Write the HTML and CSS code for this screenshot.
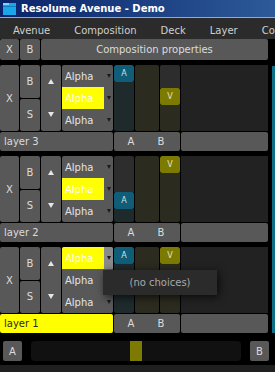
FILE: index.html
```html
<!DOCTYPE html>
<html>
<head>
<meta charset="utf-8">
<link rel="stylesheet" href="styles.css">
</head>
<body>
<div class="app">
  <div class="titlebar">
    <svg class="appicon" width="13" height="12" viewBox="0 0 13 12">
      <rect x="0" y="0" width="13" height="12" fill="#1aa6ea"/>
      <rect x="0" y="0" width="6" height="2" fill="#7fd4ff"/>
      <rect x="0" y="3" width="13" height="1" fill="#0f7fc0"/>
    </svg>
    <span class="title">Resolume Avenue - Demo</span>
  </div>
  <div class="menubar">
    <span class="menu-item">Avenue</span>
    <span class="menu-item">Composition</span>
    <span class="menu-item">Deck</span>
    <span class="menu-item">Layer</span>
    <span class="menu-item">Column</span>
  </div>
  <div class="comprow">
    <div class="btn comp-x">X</div>
    <div class="btn comp-b">B</div>
    <div class="btn comp-props">Composition properties</div>
  </div>
  <div class="workspace">
    <div class="layers">

      <div class="layer">
        <div class="layer-main">
          <div class="btn big-x">X</div>
          <div class="bs-col"><div class="btn bs">B</div><div class="btn bs">S</div></div>
          <div class="btn arrows"><span class="arrow-cell"><i class="tri-up"></i></span><span class="arrow-cell"><i class="tri-down"></i></span></div>
          <div class="blend-col">
            <div class="blend-row"><span class="blend-name">Alpha</span><span class="blend-drop"><i class="caret"></i></span></div>
            <div class="blend-row"><span class="blend-name selected">Alpha</span><span class="blend-drop"><i class="caret"></i></span></div>
            <div class="blend-row"><span class="blend-name">Alpha</span><span class="blend-drop"><i class="caret"></i></span></div>
          </div>
          <div class="fader fader-a"><div class="fader-top" style="height:0px"></div><div class="handle handle-a">A</div><div class="fader-rest"></div></div>
          <div class="meter"></div>
          <div class="fader fader-v"><div class="fader-top" style="height:23px"></div><div class="handle handle-v">V</div><div class="fader-rest"></div></div>
          <div class="clip-area"></div>
        </div>
        <div class="layer-foot">
          <div class="layer-name">layer 3</div>
          <div class="ab-bar"><span class="ab-a">A</span><span class="ab-b">B</span></div>
          <div class="foot-rest"></div>
        </div>
      </div>

      <div class="layer">
        <div class="layer-main">
          <div class="btn big-x">X</div>
          <div class="bs-col"><div class="btn bs">B</div><div class="btn bs">S</div></div>
          <div class="btn arrows"><span class="arrow-cell"><i class="tri-up"></i></span><span class="arrow-cell"><i class="tri-down"></i></span></div>
          <div class="blend-col">
            <div class="blend-row"><span class="blend-name">Alpha</span><span class="blend-drop"><i class="caret"></i></span></div>
            <div class="blend-row"><span class="blend-name selected">Alpha</span><span class="blend-drop"><i class="caret"></i></span></div>
            <div class="blend-row"><span class="blend-name">Alpha</span><span class="blend-drop"><i class="caret"></i></span></div>
          </div>
          <div class="fader fader-a"><div class="fader-top" style="height:36px"></div><div class="handle handle-a">A</div><div class="fader-rest"></div></div>
          <div class="meter"></div>
          <div class="fader fader-v"><div class="fader-top" style="height:0px"></div><div class="handle handle-v">V</div><div class="fader-rest"></div></div>
          <div class="clip-area"></div>
        </div>
        <div class="layer-foot">
          <div class="layer-name">layer 2</div>
          <div class="ab-bar"><span class="ab-a">A</span><span class="ab-b">B</span></div>
          <div class="foot-rest"></div>
        </div>
      </div>

      <div class="layer">
        <div class="layer-main">
          <div class="btn big-x">X</div>
          <div class="bs-col"><div class="btn bs">B</div><div class="btn bs">S</div></div>
          <div class="btn arrows"><span class="arrow-cell"><i class="tri-up"></i></span><span class="arrow-cell"><i class="tri-down"></i></span></div>
          <div class="blend-col">
            <div class="blend-row"><span class="blend-name selected">Alpha</span><span class="blend-drop hot"><i class="caret"></i></span></div>
            <div class="blend-row"><span class="blend-name">Alpha</span><span class="blend-drop"><i class="caret"></i></span></div>
            <div class="blend-row"><span class="blend-name">Alpha</span><span class="blend-drop"><i class="caret"></i></span></div>
          </div>
          <div class="fader fader-a"><div class="fader-top" style="height:0px"></div><div class="handle handle-a">A</div><div class="fader-rest"></div></div>
          <div class="meter"></div>
          <div class="fader fader-v"><div class="fader-top" style="height:0px"></div><div class="handle handle-v">V</div><div class="fader-rest"></div></div>
          <div class="clip-area"></div>
        </div>
        <div class="layer-foot">
          <div class="layer-name active">layer 1</div>
          <div class="ab-bar"><span class="ab-a">A</span><span class="ab-b">B</span></div>
          <div class="foot-rest"></div>
        </div>
        <div class="popup">(no choices)</div>
      </div>

    </div>
    <div class="side-strip"></div>
  </div>
  <div class="crossfader">
    <div class="btn xf-btn">A</div>
    <div class="xf-track"><div class="xf-handle"></div></div>
    <div class="btn xf-btn">B</div>
  </div>
  <div class="statusbar"></div>
</div>
</body>
</html>
```

FILE: styles.css
```css
* { box-sizing: border-box; margin: 0; padding: 0; }

html, body {
  width: 275px;
  height: 372px;
  overflow: hidden;
  background: #000;
}

body {
  font-family: "DejaVu Sans", Verdana, sans-serif;
  font-size: 10px;
  color: #dcdcdc;
}

.app {
  display: flex;
  flex-direction: column;
  width: 275px;
  height: 372px;
}

/* title bar */
.titlebar {
  height: 18px;
  flex: none;
  display: flex;
  align-items: center;
  padding-left: 3px;
  background: linear-gradient(to right, #0a246a, #2d5a98);
  border-bottom: 1px solid #9aa8c4;
}

.appicon { flex: none; margin-right: 5px; }

.title {
  font-weight: bold;
  color: #fff;
  white-space: nowrap;
}

/* menu */
.menubar {
  height: 21px;
  flex: none;
  display: flex;
  align-items: center;
  padding: 3px 0 0 1px;
  background: #2b2b2b;
  white-space: nowrap;
  overflow: hidden;
}

.menu-item {
  padding: 0 12px;
  color: #d0d0d0;
}

/* generic button */
.btn {
  background: #585858;
  border-radius: 2px;
  color: #dcdcdc;
  display: flex;
  align-items: center;
  justify-content: center;
}

/* composition row */
.comprow {
  height: 21px;
  flex: none;
  display: flex;
  gap: 1px;
  margin-bottom: 5px;
}

.comp-x { width: 19px; }
.comp-b { width: 20px; }
.comp-props { width: 227px; }

/* workspace */
.workspace {
  height: 268px;
  flex: none;
  display: flex;
  gap: 4px;
}

.layers {
  width: 268px;
  display: flex;
  flex-direction: column;
  gap: 5px;
}

.side-strip {
  width: 3px;
  margin-top: 1px;
  background: #0d6e86;
}

.layer {
  position: relative;
  height: 86px;
  display: flex;
  flex-direction: column;
  gap: 1px;
}

.layer-main {
  height: 66px;
  display: flex;
  gap: 1px;
}

.big-x { width: 19px; }

.bs-col {
  width: 20px;
  display: flex;
  flex-direction: column;
  gap: 1px;
}

.bs { flex: 1; }

.arrows {
  width: 20px;
  flex-direction: column;
}

.arrow-cell {
  flex: 1;
  display: flex;
  align-items: center;
  justify-content: center;
}

.tri-up {
  width: 0;
  height: 0;
  border-left: 3px solid transparent;
  border-right: 3px solid transparent;
  border-bottom: 5px solid #e6e6e6;
}

.tri-down {
  width: 0;
  height: 0;
  border-left: 3px solid transparent;
  border-right: 3px solid transparent;
  border-top: 5px solid #e6e6e6;
}

/* blend mode dropdowns */
.blend-col {
  width: 51px;
  display: flex;
  flex-direction: column;
  background: #585858;
  border-radius: 2px;
  overflow: hidden;
}

.blend-row {
  height: 22px;
  display: flex;
}

.blend-name {
  width: 42px;
  display: flex;
  align-items: center;
  padding-left: 3px;
  color: #e4e4e4;
}

.blend-name.selected {
  background: #ffff00;
  color: #ffffff;
}

.blend-drop {
  flex: 1;
  display: flex;
  align-items: center;
  justify-content: center;
}

.blend-drop.hot { background: #8a8a8a; }

.caret {
  width: 0;
  height: 0;
  border-left: 2px solid transparent;
  border-right: 2px solid transparent;
  border-top: 4px solid #1a1a1a;
}

/* faders */
.fader {
  width: 20px;
  display: flex;
  flex-direction: column;
  border-radius: 2px;
  overflow: hidden;
}

.fader-top {
  flex: none;
  background: #2d2d2d;
}

.handle {
  height: 17px;
  flex: none;
  border-radius: 2px;
  display: flex;
  align-items: center;
  justify-content: center;
  font-size: 8px;
}

.handle-a { background: #0f5d77; color: #cfe0e6; }
.handle-v { background: #7c7a00; color: #e6e4c8; }

.fader-a .fader-rest { flex: 1; background: #1e2a2c; }
.fader-v .fader-rest { flex: 1; background: #2b2b1f; }

.meter {
  width: 24px;
  background: #2b2b1f;
  border-radius: 2px;
}

.clip-area {
  flex: 1;
  background: #222;
}

/* layer footer */
.layer-foot {
  height: 19px;
  display: flex;
  gap: 1px;
}

.layer-name {
  width: 113px;
  background: #585858;
  border-radius: 2px;
  display: flex;
  align-items: center;
  padding-left: 4px;
  color: #dcdcdc;
}

.layer-name.active {
  background: #ffff00;
  color: #2a2a2a;
}

.ab-bar {
  width: 66px;
  background: #585858;
  border-radius: 2px;
  display: flex;
  align-items: center;
}

.ab-a { width: 34px; text-align: center; }
.ab-b { width: 26px; text-align: center; }

.foot-rest {
  flex: 1;
  background: #585858;
  border-radius: 2px;
}

/* popup overlay */
.popup {
  position: absolute;
  left: 103px;
  top: 23px;
  width: 114px;
  height: 25px;
  background: #2b2b2b;
  color: #a8a8a8;
  display: flex;
  align-items: center;
  justify-content: center;
  box-shadow: 2px 2px 8px rgba(0, 0, 0, 0.7);
}

/* crossfader */
.crossfader {
  height: 32px;
  flex: none;
  display: flex;
  align-items: flex-start;
  padding: 8px 0 0 3px;
  gap: 9px;
}

.xf-btn {
  width: 19px;
  height: 20px;
}

.xf-track {
  width: 210px;
  height: 20px;
  background: #111;
  border-radius: 4px;
  padding-left: 99px;
}

.xf-handle {
  width: 12px;
  height: 20px;
  background: #7c7a00;
}

.statusbar {
  flex: 1;
  background: #1f1f1f;
}
```
